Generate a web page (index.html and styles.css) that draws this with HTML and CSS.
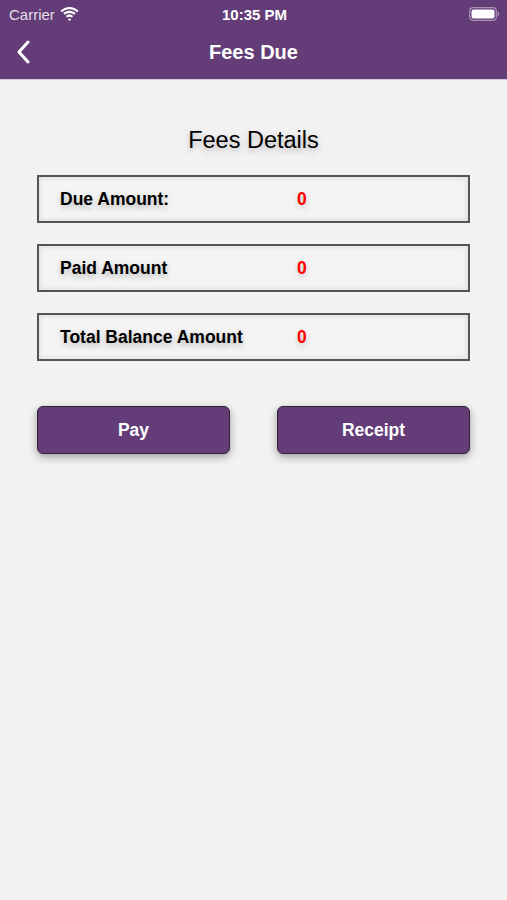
FILE: index.html
```html
<!DOCTYPE html>
<html lang="en">
  <head>
    <meta charset="utf-8">
    <title>Fees Due</title>
    <link rel="stylesheet" href="styles.css">
  </head>
  <body>

  <div class="header">
    <div class="status">
      <div class="status-left">
        <span>Carrier</span>
        <svg class="wifi" width="19" height="14" viewBox="0 0 19 14">
          <path d="M9.5 2.2c2.9 0 5.5 1.1 7.5 3l1.5-1.5C16.1 1.4 12.9 0 9.5 0S2.9 1.4.5 3.7L2 5.2c2-1.9 4.6-3 7.5-3z" fill="#fff"/>
          <path d="M9.5 6c1.8 0 3.4.7 4.7 1.8l1.5-1.5C14.1 4.8 11.9 3.8 9.5 3.8S4.9 4.8 3.3 6.3l1.5 1.5C6.1 6.7 7.7 6 9.5 6z" fill="#fff"/>
          <path d="M9.5 9.7c.9 0 1.7.3 2.3.9l1.5-1.5c-1-.9-2.3-1.5-3.8-1.5s-2.8.6-3.8 1.5l1.5 1.5c.6-.6 1.4-.9 2.3-.9z" fill="#fff"/>
          <path d="M9.5 14l1.7-1.7c-.4-.4-1-.7-1.7-.7s-1.3.3-1.700.7z" fill="#fff"/>
        </svg>
      </div>
      <div class="status-time">10:35 PM</div>
      <div class="status-right">
        <svg width="31" height="14" viewBox="0 0 31 14">
          <rect x="0.7" y="0.7" width="26.6" height="12.6" rx="3.5" fill="none" stroke="rgba(255,255,255,0.45)" stroke-width="1.2"/>
          <rect x="2.5" y="2.5" width="23" height="9" rx="2" fill="#fff"/>
          <path d="M28.6 4.7c1 .3 1.6 1.2 1.6 2.3s-.6 2-1.6 2.3z" fill="rgba(255,255,255,0.45)"/>
        </svg>
      </div>
    </div>
    <div class="navbar">
      <svg class="back" width="14" height="24" viewBox="0 0 14 24">
        <path d="M12 2L3 12l9 10" fill="none" stroke="#fff" stroke-width="3" stroke-linecap="round" stroke-linejoin="round"/>
      </svg>
      <div class="nav-title">Fees Due</div>
    </div>
  </div>

  <div class="content">
    <div class="section-title">Fees Details</div>

    <div class="fee-row">
      <span class="fee-label">Due Amount:</span>
      <span class="fee-value">0</span>
    </div>
    <div class="fee-row">
      <span class="fee-label">Paid Amount</span>
      <span class="fee-value">0</span>
    </div>
    <div class="fee-row">
      <span class="fee-label">Total Balance Amount</span>
      <span class="fee-value">0</span>
    </div>

    <div class="actions">
      <button class="btn">Pay</button>
      <button class="btn">Receipt</button>
    </div>
  </div>

  </body>
</html>
```

FILE: styles.css
```css
html {
  height: 100%;
}
body {
  margin: 0;
  padding: 0;
  background: #f2f2f2;
  font-family: "Liberation Sans", Arial, sans-serif;
  color: #000;
  height: 100%;
}

.header {
  background: #643d78;
  color: #fff;
  height: 79px;
  box-shadow: 0 1px 0 #d9c6df;
}

.status {
  height: 28px;
  display: flex;
  align-items: center;
  padding: 0 7px 0 9px;
  font-size: 15px;
}
.status-left {
  display: flex;
  align-items: center;
  gap: 5px;
  flex: 1;
  color: rgba(255,255,255,0.85);
}
.status-time {
  flex: 1;
  text-align: center;
  font-weight: bold;
  font-size: 15px;
}
.status-right {
  flex: 1;
  display: flex;
  justify-content: flex-end;
}

.navbar {
  height: 51px;
  display: flex;
  align-items: center;
  justify-content: center;
  position: relative;
}
.back {
  position: absolute;
  left: 16px;
  top: 12px;
}
.nav-title {
  font-size: 20px;
  font-weight: bold;
  margin-bottom: 2px;
}

.content {
  padding: 48px 37px 0 37px;
}

.section-title {
  text-align: center;
  font-size: 23.5px;
  text-shadow: 0 3px 6px rgba(0,0,0,0.25);
  margin-bottom: 21px;
}

.fee-row {
  height: 44px;
  border: 2px solid #555;
  background: #f4f4f4;
  box-shadow: inset 0 0 6px rgba(0,0,0,0.12);
  display: flex;
  align-items: center;
  margin-bottom: 21px;
  font-weight: bold;
  font-size: 17.5px;
}
.fee-label {
  width: 237px;
  padding-left: 21px;
  text-shadow: 0 3px 6px rgba(0,0,0,0.25);
}
.fee-value {
  color: #ff0000;
  text-shadow: 0 3px 6px rgba(0,0,0,0.2);
}

.actions {
  display: flex;
  justify-content: space-between;
  margin-top: 45px;
}
.btn {
  width: 193px;
  height: 48px;
  background: #643d78;
  border: 1.5px solid #2f2233;
  border-radius: 6px;
  color: #fff;
  font-family: "Liberation Sans", Arial, sans-serif;
  font-weight: bold;
  font-size: 17.5px;
  box-shadow: 0 3px 8px rgba(0,0,0,0.35);
}
```
